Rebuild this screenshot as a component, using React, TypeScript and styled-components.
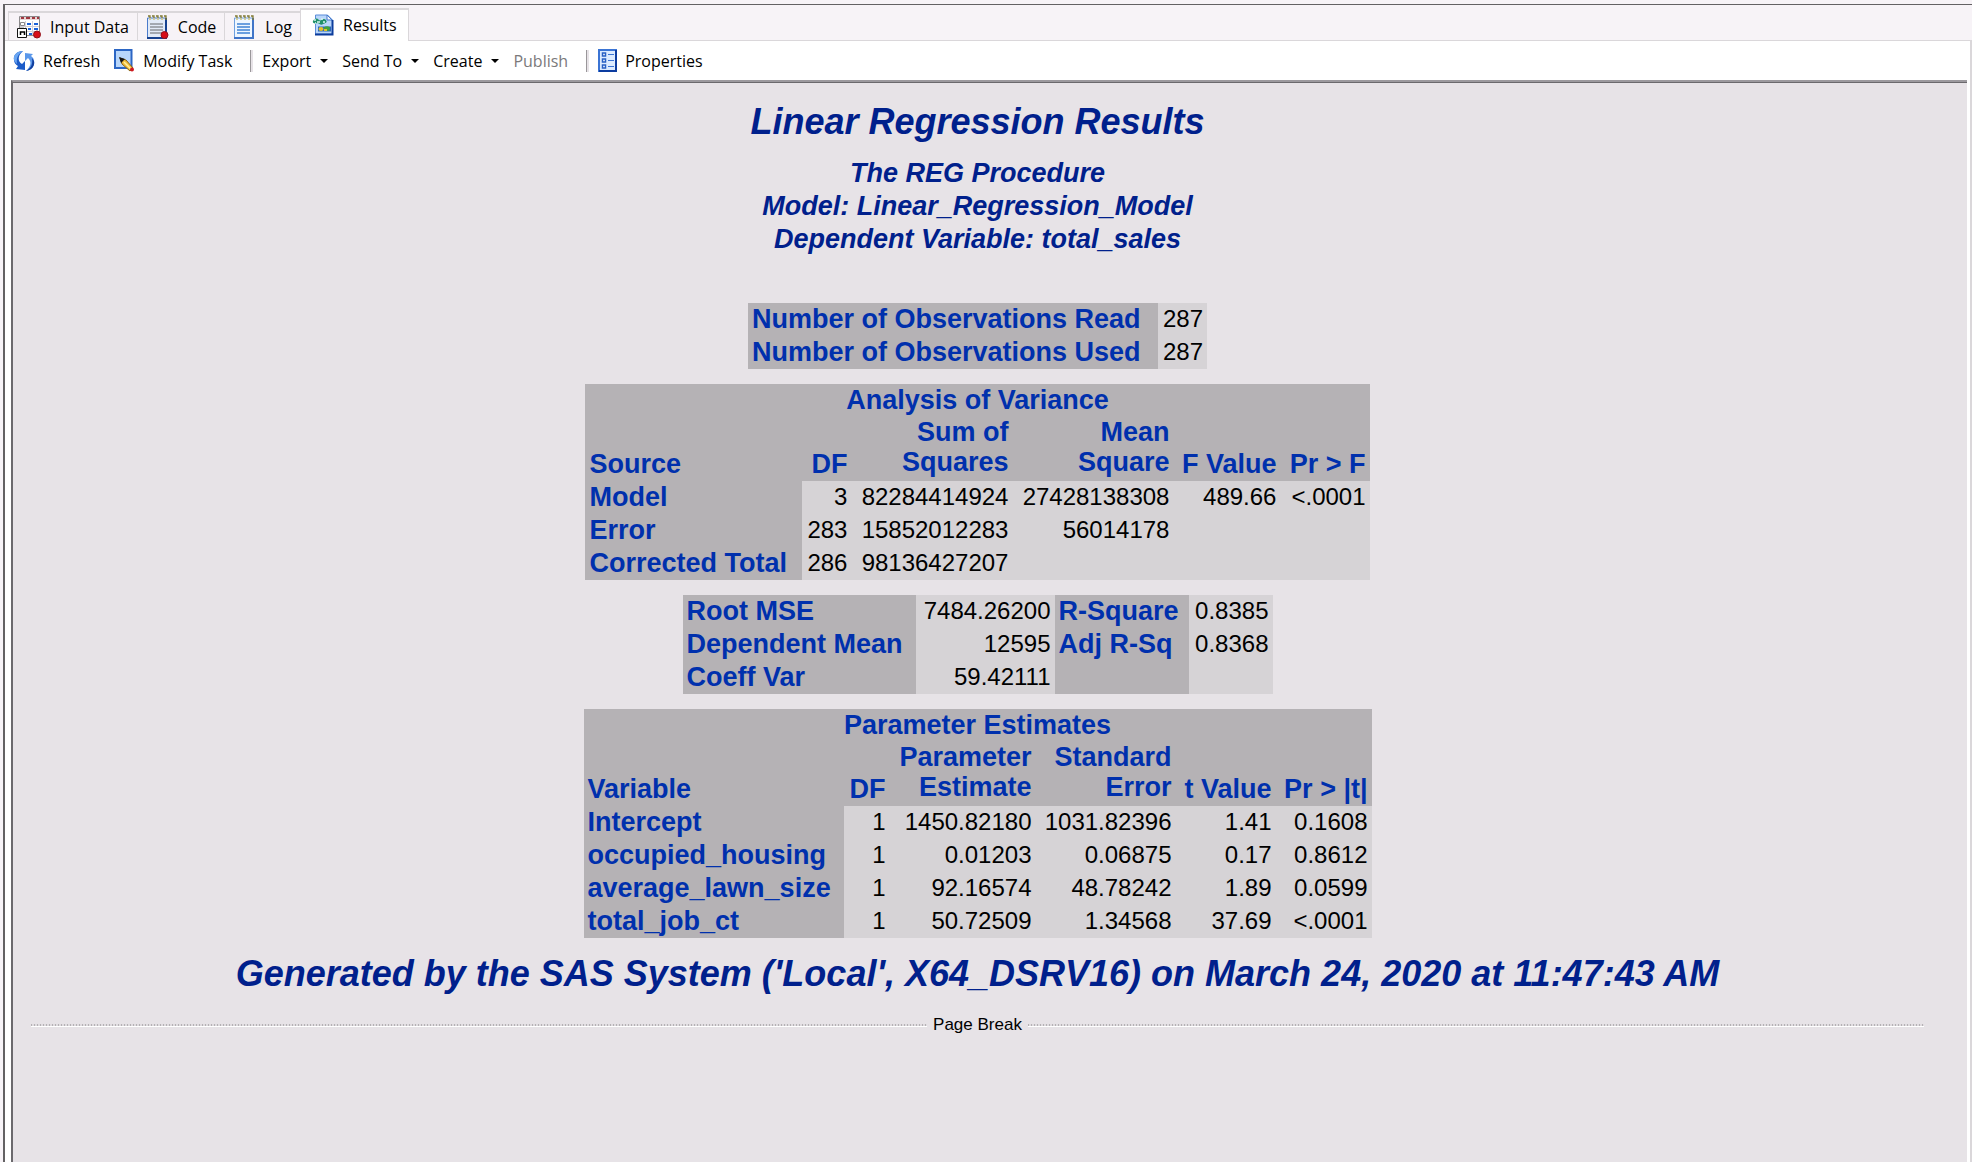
import React from "react";
import styled, { createGlobalStyle } from "styled-components";

const GlobalStyle = createGlobalStyle`
  *, *::before, *::after { box-sizing: border-box; }
  body { margin: 0; background: #f7f3f7; }
`;

const uiFont = `"Open Sans", "Noto Sans", sans-serif`;
const reportFont = `"Liberation Sans", Arial, sans-serif`;

const Page = styled.div`
  display: flex;
  flex-direction: column;
  min-height: 100vh;
  padding: 4px 0 0 3px;
  background: #f7f3f7;
  font-family: ${uiFont};
`;

const Frame = styled.div`
  flex: 1;
  display: flex;
  flex-direction: column;
  border-top: 1px solid #636163;
  border-left: 2px solid #636163;
`;

const TabBar = styled.div`
  display: flex;
  align-items: flex-end;
  height: 36px;
  padding-left: 3px;
  box-shadow: inset 0 -1px 0 #dad7da;
`;

const Tab = styled.button<{ $active?: boolean }>`
  display: flex;
  align-items: center;
  gap: 9px;
  height: ${(p) => (p.$active ? 33 : 30)}px;
  padding: ${(p) => (p.$active ? "0 11px 2px" : "0 8px")};
  border: 1px solid #dad7da;
  border-top-width: 2px;
  border-right-width: ${(p) => (p.$active ? 1 : 0)}px;
  border-bottom-width: ${(p) => (p.$active ? 0 : 1)}px;
  background: ${(p) => (p.$active ? "#ffffff" : "#f7f3f7")};
  color: #000;
  font: 16px/24px ${uiFont};
  white-space: nowrap;
`;

const Body = styled.div`
  flex: 1;
  display: flex;
  flex-direction: column;
  padding: 0 3px 0 6px;
  border-right: 2px solid #dad7da;
  background: #fff;
`;

const Toolbar = styled.div`
  display: flex;
  align-items: center;
  gap: 14px;
  height: 39px;
  padding: 0 3px 0 2px;
`;

const Tool = styled.button`
  display: flex;
  align-items: center;
  gap: 8px;
  padding: 0;
  border: 0;
  background: none;
  color: #000;
  font: 16px/24px ${uiFont};
  white-space: nowrap;
  &:disabled { color: #7b797b; }
`;

const Separator = styled.span`
  width: 3px;
  height: 22px;
  margin: 0 -5px 0 4px;
  border-left: 1px solid #9a979a;
  border-right: 2px solid #e7e3e7;
`;

const Arrow = styled.span`
  margin-left: 1px;
  border: 4px solid transparent;
  border-top-color: #000;
  border-bottom: 0;
`;

const Report = styled.main`
  flex: 1;
  display: flex;
  flex-direction: column;
  align-items: center;
  padding: 19px 43px 0 18px;
  border-top: 2px solid #9c999e;
  border-left: 2px solid #6b696d;
  box-shadow: inset 0 1px 0 #6b696d;
  background: #e7e3e7;
  font-family: ${reportFont};
`;

const Title = styled.h1`
  margin: 0;
  color: #00208c;
  font: italic bold 36px/42px ${reportFont};
  text-align: center;
`;

const Procedure = styled.h2`
  margin: 14px 0 47px;
  color: #00208c;
  font: italic bold 27px/33px ${reportFont};
  text-align: center;
`;

const DataTable = styled.table<{ $width: number }>`
  width: ${(p) => p.$width}px;
  margin-bottom: 15px;
  border-collapse: collapse;
  table-layout: fixed;
  background: #d6d3d6;
`;

const Head = styled.th<{ $align?: string; $top?: boolean }>`
  padding: ${(p) => (p.$top ? 0 : 1)}px 4px;
  background: #b5b2b5;
  color: #0030ad;
  font: bold 27px/${(p) => (p.$top ? 30 : 31)}px ${reportFont};
  text-align: ${(p) => p.$align || "left"};
  vertical-align: ${(p) => (p.$top ? "top" : "bottom")};
  white-space: nowrap;
`;

const HeadRow = styled.tr`
  height: 64px;
`;

const Cell = styled.td`
  height: 33px;
  padding: 1px 4px;
  color: #000;
  font: 24px/29px ${reportFont};
  text-align: right;
  vertical-align: top;
  white-space: nowrap;
`;

const PageBreak = styled.div`
  display: flex;
  align-items: center;
  align-self: stretch;
  gap: 6px;
  margin-top: 20px;
  font: 17px/20px ${reportFont};
`;

const Rule = styled.span`
  flex: 1;
  height: 3px;
  border-bottom: 1px solid #fff;
  background: repeating-linear-gradient(90deg, #b5b2b5 0 1px, #e0dce0 1px 3px);
`;

const InputIcon = () => (
  <svg width="24" height="24" viewBox="0 0 24 24" aria-hidden="true">
    <path d="M2.500 1.500h20v19h-20z" fill="#fff" stroke="#8c8a8c" />
    <path d="M3 2h19v3H3z" fill="#e8d6d6" />
    <path d="M4 3h3M9 3h4M15 3h3M20 3h2" stroke="#a03840" strokeWidth="2" />
    <path d="M3.500 7.500h4v3h-4zM3 13h4" fill="none" stroke="#8c8a8c" />
    <path d="M10 9h4M17 9h4M17 14h4M11 14h3M12 19h3" stroke="#1c62d8" strokeWidth="2" />
    <path d="M8.500 6v14M15.500 6v14M3 11.500h19M8 16.500h14" stroke="#d3d0d8" />
    <path d="M.5 13.500h9v9h-9z" fill="#fff" stroke="#111" />
    <path d="M3.500 20v-3h4v3" fill="none" stroke="#000" strokeWidth="1.500" />
    <circle cx="20" cy="19.500" r="3.500" fill="#d80d18" stroke="#8f1018" />
  </svg>
);

const NoteIcon = ({ dot, blue }: { dot?: boolean; blue?: boolean }) => (
  <svg width="23" height="24" viewBox="0 0 23 24" aria-hidden="true">
    <path d="M1.500 3h18v20h-18z" fill={blue ? "#eef6ff" : "#e2eaf7"} stroke={blue ? "#6fa0df" : "#4b7bcb"} />
    <path d="M20 3v20H1" fill="none" stroke={blue ? "#3f74c8" : "#16418f"} strokeWidth="2" />
    <path d="M4 9h13M4 12h13M4 15h13M4 18h13" stroke={blue ? "#3f83d5" : "#8f9299"} strokeWidth="1.500" />
    <path d="M2 1h2v4M6 1h2v4M10 1h2v4M14 1h2v4M18 1h2v4" fill="none" stroke="#807a32" strokeWidth="1.300" />
    <path d="M3 4h2M7 4h2M11 4h2M15 4h2" stroke="#fffbd0" />
    {dot && <circle cx="18.500" cy="20" r="3.500" fill="#d80d18" stroke="#94101a" />}
  </svg>
);

const ResultsIcon = () => (
  <svg width="22" height="22" viewBox="0 0 22 22" aria-hidden="true">
    <path d="M3.500 1h12l5 5v14h-17z" fill="#b9d6fa" stroke="#5a8bd8" />
    <path d="M15 1v5h5z" fill="#f5faff" stroke="#4479cb" />
    <path d="M20.500 6v14.500H3" fill="none" stroke="#0c3c9c" strokeWidth="2" />
    <path d="M1 7c2-3 4-3 6-1s4-3 7 0c2 3-1 3-3 4-2 2-4-1-6-1C3 10 0 9 1 7z" fill="#1f8f6a" />
    <path d="M2 6h2M5 8h3M9 5h2M11 8h2M3 9h1" stroke="#d9f5ec" strokeWidth="1.300" />
    <path d="M6 12.500h13v5H6z" fill="#2a66b8" />
    <ellipse cx="9" cy="15" rx="2.500" ry="2" fill="#e1c12a" />
    <ellipse cx="15" cy="14.500" rx="3" ry="2.300" fill="#3fa33a" />
    <path d="M12 16h3" stroke="#e1c12a" strokeWidth="2" />
  </svg>
);

const RefreshIcon = () => (
  <svg width="22" height="22" viewBox="0 0 22 22" aria-hidden="true">
    <path d="M10 1C4 1 0 5 1 10c0 3 2 5 4 6l-2 3 9 1V11l-3 3C5 12 4 6 10 1z" fill="#1c5cc8" />
    <path d="M10 1C4 1 0 5 1 10c1 2 2 3 3 4C3 8 5 4 10 1z" fill="#6aa6f2" />
    <path d="M13 21c6-1 9-5 8-10 0-3-2-4-3-5l2-2-8-1v8l3-3c4 4 3 8-2 13z" fill="#5a97ea" />
    <path d="M13 21c6-1 9-5 8-10l-2-3c1 6-1 10-6 13z" fill="#123f9e" />
  </svg>
);

const ModifyIcon = () => (
  <svg width="21" height="23" viewBox="0 0 21 23" aria-hidden="true">
    <path d="M1 1h16.500v18H1z" fill="#b8d6fa" stroke="#2c66c4" strokeWidth="2" />
    <path d="M6 9l2 6 8 7 3-3-7-8z" fill="#f0bd3c" stroke="#8c6414" />
    <path d="M5 8l2 6 4-4z" fill="#151515" />
    <path d="M10 13l7 7" stroke="#fff0a0" strokeWidth="1.500" />
    <circle cx="18" cy="20.500" r="2" fill="#cf1820" />
  </svg>
);

const PropertiesIcon = () => (
  <svg width="19" height="23" viewBox="0 0 19 23" aria-hidden="true">
    <path d="M1 1h17v21H1z" fill="#dcebff" stroke="#3b74d4" strokeWidth="2" />
    <path d="M18 1v21H1" fill="none" stroke="#0c3ca0" strokeWidth="2" />
    <path d="M4.500 4h3v3h-3zM4.500 10h3v3h-3zM4.500 16h3v3h-3z" fill="#fff" stroke="#2860c4" strokeWidth="1.500" />
    <path d="M10 5.500h6M10 11.500h6M10 17.500h6" stroke="#3b74d4" />
  </svg>
);

const Cols = ({ widths }: { widths: number[] }) => (
  <colgroup>
    {widths.map((w, i) => (
      <col key={i} width={w} />
    ))}
  </colgroup>
);

type StatTableProps = {
  title: string;
  widths: number[];
  columns: string[][];
  rows: string[][];
};

const StatTable = ({ title, widths, columns, rows }: StatTableProps) => (
  <DataTable $width={widths.reduce((a, b) => a + b, 0)}>
    <Cols widths={widths} />
    <thead>
      <tr>
        <Head colSpan={widths.length} scope="colgroup" $align="center">{title}</Head>
      </tr>
      <HeadRow>
        {columns.map((lines, i) => (
          <Head key={i} scope="col" $align={i ? "right" : "left"} $top={lines.length > 1}>
            {lines.map((line, j) => (
              <React.Fragment key={line}>
                {j > 0 && <br />}
                {line}
              </React.Fragment>
            ))}
          </Head>
        ))}
      </HeadRow>
    </thead>
    <tbody>
      {rows.map(([name, ...values]) => (
        <tr key={name}>
          <Head scope="row">{name}</Head>
          {values.map((v, i) => (
            <Cell key={i}>{v}</Cell>
          ))}
        </tr>
      ))}
    </tbody>
  </DataTable>
);

const variance = [
  ["Model", "3", "82284414924", "27428138308", "489.66", "<.0001"],
  ["Error", "283", "15852012283", "56014178", "", ""],
  ["Corrected Total", "286", "98136427207", "", "", ""],
];

const fit = [
  ["Root MSE", "7484.26200", "R-Square", "0.8385"],
  ["Dependent Mean", "12595", "Adj R-Sq", "0.8368"],
  ["Coeff Var", "59.42111", "", ""],
];

const estimates = [
  ["Intercept", "1", "1450.82180", "1031.82396", "1.41", "0.1608"],
  ["occupied_housing", "1", "0.01203", "0.06875", "0.17", "0.8612"],
  ["average_lawn_size", "1", "92.16574", "48.78242", "1.89", "0.0599"],
  ["total_job_ct", "1", "50.72509", "1.34568", "37.69", "<.0001"],
];

export default function App() {
  return (
    <Page>
      <GlobalStyle />
      <Frame>
        <TabBar role="tablist">
          <Tab role="tab"><InputIcon />Input Data</Tab>
          <Tab role="tab"><NoteIcon dot />Code</Tab>
          <Tab role="tab"><NoteIcon blue />Log</Tab>
          <Tab role="tab" aria-selected="true" $active><ResultsIcon />Results</Tab>
        </TabBar>
        <Body>
          <Toolbar role="toolbar">
            <Tool><RefreshIcon />Refresh</Tool>
            <Tool><ModifyIcon />Modify Task</Tool>
            <Separator />
            <Tool>Export<Arrow /></Tool>
            <Tool>Send To<Arrow /></Tool>
            <Tool>Create<Arrow /></Tool>
            <Tool disabled>Publish</Tool>
            <Separator />
            <Tool><PropertiesIcon />Properties</Tool>
          </Toolbar>
          <Report>
            <Title>Linear Regression Results</Title>
            <Procedure>
              The REG Procedure<br />
              Model: Linear_Regression_Model<br />
              Dependent Variable: total_sales
            </Procedure>
            <DataTable $width={459}>
              <Cols widths={[410, 49]} />
              <tbody>
                {["Number of Observations Read", "Number of Observations Used"].map((name) => (
                  <tr key={name}>
                    <Head scope="row">{name}</Head>
                    <Cell>287</Cell>
                  </tr>
                ))}
              </tbody>
            </DataTable>
            <StatTable
              title="Analysis of Variance"
              widths={[217, 49, 161, 161, 107, 89]}
              columns={[["Source"], ["DF"], ["Sum of", "Squares"], ["Mean", "Square"], ["F Value"], ["Pr > F"]]}
              rows={variance}
            />
            <DataTable $width={590}>
              <Cols widths={[233, 139, 134, 84]} />
              <tbody>
                {fit.map(([name, value, name2, value2]) => (
                  <tr key={name}>
                    <Head scope="row">{name}</Head>
                    <Cell>{value}</Cell>
                    <Head scope="row">{name2}</Head>
                    <Cell>{value2}</Cell>
                  </tr>
                ))}
              </tbody>
            </DataTable>
            <StatTable
              title="Parameter Estimates"
              widths={[260, 46, 146, 140, 100, 96]}
              columns={[["Variable"], ["DF"], ["Parameter", "Estimate"], ["Standard", "Error"], ["t Value"], ["Pr > |t|"]]}
              rows={estimates}
            />
            <Title as="p">
              Generated by the SAS System ('Local', X64_DSRV16) on March 24, 2020 at 11:47:43 AM
            </Title>
            <PageBreak>
              <Rule />
              Page Break
              <Rule />
            </PageBreak>
          </Report>
        </Body>
      </Frame>
    </Page>
  );
}
